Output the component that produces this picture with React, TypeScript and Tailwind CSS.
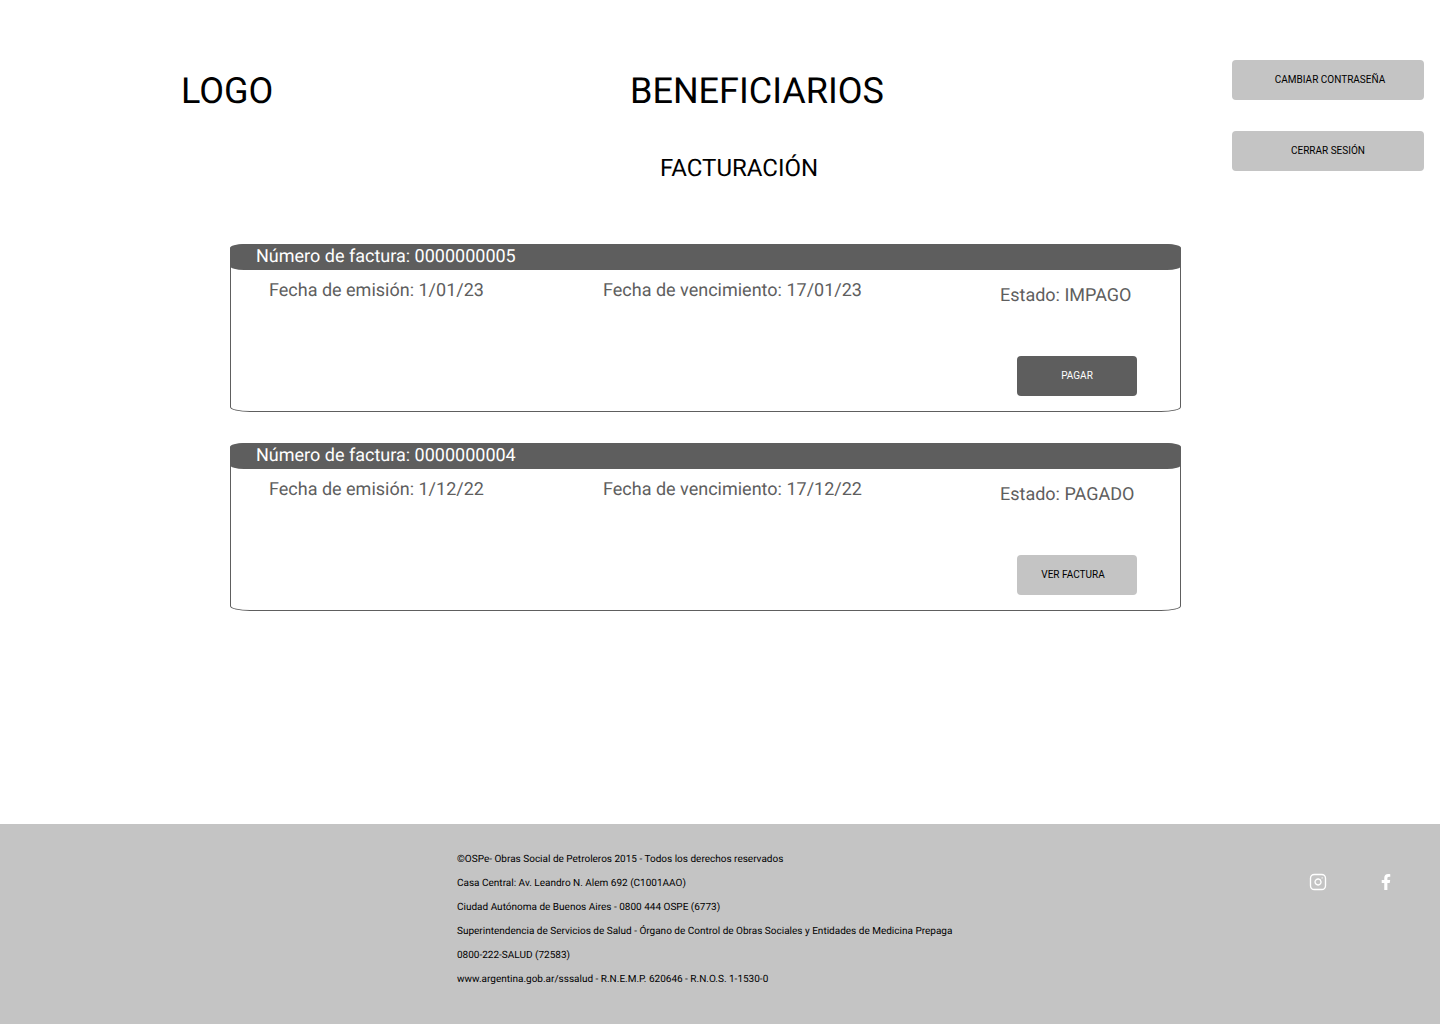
import { Instagram } from "lucide-react"
import { FaFacebookF } from "react-icons/fa"

const invoices = [
    { number: "0000000005", issued: "1/01/23", due: "17/01/23", status: "IMPAGO", action: "PAGAR", paid: false },
    { number: "0000000004", issued: "1/12/22", due: "17/12/22", status: "PAGADO", action: "VER FACTURA", paid: true },
]

const footerLines = [
    "©OSPe- Obras Social de Petroleros 2015 - Todos los derechos reservados",
    "Casa Central: Av. Leandro N. Alem 692 (C1001AAO)",
    "Ciudad Autónoma de Buenos Aires - 0800 444 OSPE (6773)",
    "Superintendencia de Servicios de Salud - Órgano de Control de Obras Sociales y Entidades de Medicina Prepaga",
    "0800-222-SALUD (72583)",
    "www.argentina.gob.ar/sssalud - R.N.E.M.P. 620646 - R.N.O.S. 1-1530-0",
]

function InvoiceCard({ invoice }: { invoice: typeof invoices[number] }) {
    return <div className="w-[951px] h-[168px] border border-[#5e5e5e] rounded-[20px/5px] flex flex-col">
        <div className="-mt-px -mx-px h-[26px] bg-[#5e5e5e] rounded-[14px/4px] pl-[26px] pt-px text-[18px] leading-[24px] text-white">
            Número de factura: {invoice.number}
        </div>
        <div className="flex h-[50px] pl-[38px] text-[18px] leading-[21px] text-[#5e5e5e]">
            <p className="w-[334px] mt-[10px]">Fecha de emisión: {invoice.issued}</p>
            <p className="w-[397px] mt-[10px]">Fecha de vencimiento: {invoice.due}</p>
            <p className="mt-[15px]">Estado: {invoice.status}</p>
        </div>
        <div className="flex justify-end pr-[43px] mt-[36px]">
            {invoice.paid
                ? <button className="w-[120px] h-[40px] rounded bg-[#c4c4c4] pr-[8px] pb-px text-[10px] text-black">{invoice.action}</button>
                : <button className="w-[120px] h-[40px] rounded bg-[#5e5e5e] pb-px text-[10px] text-white">{invoice.action}</button>}
        </div>
    </div>
}

export default function App() {
    return <div className="flex flex-col h-[1024px] bg-white font-['Roboto',sans-serif] [text-rendering:geometricPrecision] overflow-hidden">
        <div className="flex h-[244px] pt-[60px]">
            <h2 className="w-[630px] pl-[181px] mt-[10px] text-[36px] leading-[42px] text-black shrink-0">LOGO</h2>
            <div className="flex flex-col">
                <h1 className="text-[36px] leading-[42px] text-black mt-[10px]">BENEFICIARIOS</h1>
                <p className="text-[24px] leading-[28px] text-black mt-[42px] ml-[30px]">FACTURACIÓN</p>
            </div>
            <div className="ml-auto mr-[16px] flex flex-col gap-[31px]">
                <button className="w-[192px] h-[40px] rounded bg-[#c4c4c4] pl-[4px] pb-px text-[10px] text-black">CAMBIAR CONTRASEÑA</button>
                <button className="w-[192px] h-[40px] rounded bg-[#c4c4c4] pb-px text-[10px] text-black">CERRAR SESIÓN</button>
            </div>
        </div>

        <div className="flex flex-col gap-[31px] pl-[230px]">
            {invoices.map(invoice => <InvoiceCard key={invoice.number} invoice={invoice} />)}
        </div>

        <div className="mt-auto h-[200px] bg-[#c4c4c4] flex pl-[457px] pt-[30px]">
            <div className="flex flex-col gap-[12px] text-[10px] leading-[12px] text-black">
                {footerLines.map(line => <p key={line}>{line}</p>)}
            </div>
            <div className="ml-auto flex items-center gap-[51px] h-[24px] mt-[16px] pr-[46px] text-white">
                <Instagram size={18} strokeWidth={1.8} />
                <FaFacebookF size={16} />
            </div>
        </div>
    </div>
}
